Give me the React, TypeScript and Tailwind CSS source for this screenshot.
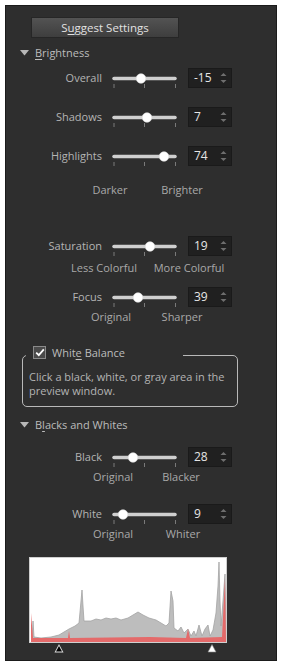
import { ReactNode } from 'react';

const FONT = 'font-["Open_Sans","Noto_Sans",sans-serif]';

const Caret = () => (
    <svg width="9" height="6" viewBox="0 0 9 6" className="shrink-0">
        <polygon points="0,0 9,0 4.5,5.5" fill="#b8b8b8" />
    </svg>
);

const Slider = ({ pos }: { pos: number }) => (
    <svg width="66" height="20" viewBox="0 0 66 20" className="shrink-0 overflow-visible">
        <line x1="2" y1="10.5" x2="63" y2="10.5" stroke="#cfcfcf" strokeWidth="3.5" strokeLinecap="round" />
        <line x1="2" y1="16" x2="2" y2="20" stroke="#7a7a7a" strokeWidth="1" />
        <line x1="32.5" y1="16" x2="32.5" y2="20" stroke="#7a7a7a" strokeWidth="1" />
        <line x1="63.5" y1="16" x2="63.5" y2="20" stroke="#7a7a7a" strokeWidth="1" />
        <circle cx={pos} cy="10.5" r="4.8" fill="#ffffff" stroke="#d8d8d8" strokeWidth="0.6" />
    </svg>
);

const SpinBox = ({ value }: { value: string }) => (
    <div className="ml-[10px] flex h-[20px] w-[44px] items-center justify-between border border-[#1a1a1a] bg-[#202020] pl-[5px] pr-[4px]">
        <span className="text-[12px] leading-none text-[#e6e6e6]">{value}</span>
        <svg width="7" height="14" viewBox="0 0 7 14">
            <polygon points="0.5,5 6.5,5 3.5,2" fill="#6e6e6e" />
            <polygon points="0.5,9 6.5,9 3.5,12" fill="#6e6e6e" />
        </svg>
    </div>
);

const Row = ({ label, value, pos, className }: { label: string; value: string; pos: number; className: string }) => (
    <div className={`flex h-[20px] items-center ${className}`}>
        <span className="w-[96px] text-right text-[#b4b4b4]">{label}</span>
        <span className="ml-[10px] flex">
            <Slider pos={pos} />
        </span>
        <SpinBox value={value} />
    </div>
);

const SubLabels = ({ left, right, l, r, className }: { left: string; right: string; l: string; r: string; className: string }) => (
    <div className={`flex h-[16px] items-center text-[#a9a9a9] ${className}`}>
        <span className={`flex w-[60px] justify-center whitespace-nowrap ${l}`}>{left}</span>
        <span className={`flex w-[60px] justify-center whitespace-nowrap ${r}`}>{right}</span>
    </div>
);

const Section = ({ children, className }: { children: ReactNode; className: string }) => (
    <div className={`flex h-[16px] items-center gap-[6px] pl-[14px] text-[#bcbcbc] ${className}`}>
        <Caret />
        <span>{children}</span>
    </div>
);

// grey histogram outline, coords inside the 196x84 plot
const grey =
    '2,84 2,83 3,63 4,79 11,80 21,79 29,77 34,74 39,71 45,68 49,65 51,43 52,32 53,48 54,63 61,63 66,61 71,62 76,60 81,61 86,60 91,62 98,60 103,57 108,54 113,57 119,60 126,62 131,65 136,68 139,65 141,33 143,43 144,70 148,73 151,69 154,75 158,71 161,78 164,73 166,78 169,67 172,78 175,71 178,67 180,78 183,72 186,55 188,28 189,4 190,43 191,68 193,43 195,16 196,84';
const red = '1,84 1,55 3,80 38,80 39,73 40,80 120,79 156,80 158,71 160,80 192,79 195,20 196,84';

export default function App() {
    return (
        <div className={`h-[666px] w-[282px] bg-white p-[5px] text-[11px] ${FONT}`}>
            <div className="flex h-[656px] flex-col border border-[#1b1b1b] bg-[#2e2e2e] *:shrink-0">
                {/* Suggest button */}
                <button className="ml-[25px] mt-[11px] h-[21px] w-[148px] border border-[#262626] bg-gradient-to-b from-[#535353] to-[#3e3e3e] text-[11.5px] leading-none text-[#e2e2e2]">
                    S<u className="underline-offset-2">u</u>ggest Settings
                </button>

                <Section className="mt-[7px]">
                    <u className="underline-offset-2">B</u>rightness
                </Section>

                <Row label="Overall" value="-15" pos={29} className="mt-[7px]" />
                <Row label="Shadows" value="7" pos={35} className="mt-[19px]" />
                <Row label="Highlights" value="74" pos={52} className="mt-[19px]" />
                <SubLabels left="Darker" right="Brighter" l="ml-[74px]" r="ml-[12px]" className="mt-[16px]" />

                <Row label="Saturation" value="19" pos={38} className="mt-[38px]" />
                <SubLabels left="Less Colorful" right="More Colorful" l="ml-[68px]" r="ml-[25px]" className="mt-[4px]" />
                <Row label="Focus" value="39" pos={26} className="mt-[11px]" />
                <SubLabels left="Original" right="Sharper" l="ml-[75px]" r="ml-[11px]" className="mt-[2px]" />

                {/* White balance group */}
                <fieldset className="ml-[16px] mt-[20px] w-[216px] rounded-[5px] border border-[#b9b9b9] pb-[8px] pl-[6px]">
                    <legend className="-ml-[3px] flex h-[20px] w-[157px] items-start gap-[6px] pl-[7px] text-[#bcbcbc]">
                        <span className="mt-[1px] flex h-[13px] w-[13px] items-center justify-center border border-[#8a8a8a] bg-[#4a4a4a]">
                            <svg width="10" height="9" viewBox="0 0 10 9">
                                <polyline points="1.2,4.6 3.8,7.2 8.8,1.4" fill="none" stroke="#ffffff" strokeWidth="1.8" />
                            </svg>
                        </span>
                        <span className="leading-[16px]">
                            Whit<u className="underline-offset-2">e</u> Balance
                        </span>
                    </legend>
                    <p className="mt-[5px] whitespace-nowrap leading-[14px] text-[#b4b4b4]">
                        Click a black, white, or gray area in the
                        <br />
                        preview window.
                    </p>
                </fieldset>

                <Section className="mt-[10px]">
                    B<u className="underline-offset-2">l</u>acks and Whites
                </Section>

                <Row label="Black" value="28" pos={21} className="mt-[14px]" />
                <SubLabels left="Original" right="Blacker" l="ml-[77px]" r="ml-[8px]" className="mt-[2px]" />
                <Row label="White" value="9" pos={11} className="mt-[19px]" />
                <SubLabels left="Original" right="Whiter" l="ml-[77px]" r="ml-[10px]" className="mt-[2px]" />

                {/* histogram */}
                <div className="ml-[23px] mt-[15px] h-[86px] w-[198px] border border-[#cfcfcf] bg-white">
                    <svg width="196" height="84" viewBox="0 0 196 84">
                        <polygon points={grey} fill="#bdbdbd" stroke="#a3a3a3" strokeWidth="0.8" />
                        <polygon points={red} fill="#e46a6a" />
                    </svg>
                </div>
                <div className="ml-[23px] flex h-[10px] w-[198px]">
                    <svg width="198" height="10" viewBox="0 0 198 10">
                        <polygon points="30,1 25.5,9.5 34.5,9.5" fill="#e0e0e0" />
                        <polygon points="30,3 27,8.5 33,8.5" fill="#000000" />
                        <polygon points="183,1.5 179,9 187,9" fill="#ffffff" stroke="#8a8a8a" strokeWidth="0.6" />
                    </svg>
                </div>
            </div>
        </div>
    );
}
